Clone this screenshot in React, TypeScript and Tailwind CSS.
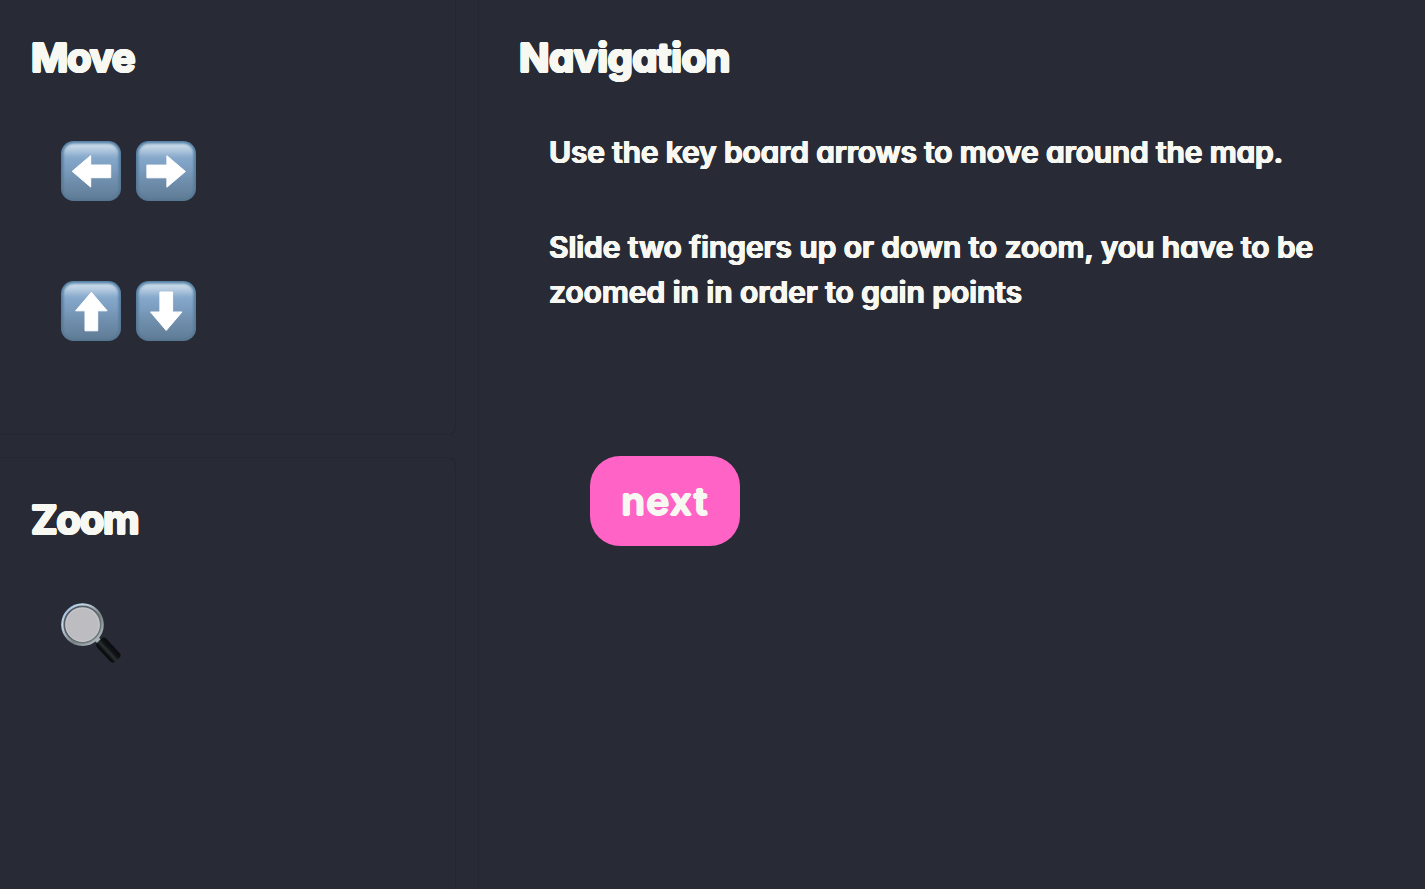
import type { ReactNode } from "react";

type Direction = "left" | "right" | "up" | "down";

const rotation: Record<Direction, number> = { left: 0, up: 90, right: 180, down: 270 };

function ArrowKey({ direction }: { direction: Direction }) {
  const id = `key-${direction}`;
  return (
    <svg width="60" height="60" viewBox="0 0 60 60" role="img" aria-label={`${direction} arrow`}>
      <defs>
        <linearGradient id={id} x1="0" y1="0" x2="0" y2="1">
          <stop offset="0" stopColor="#cadceb" />
          <stop offset="0.08" stopColor="#bdd1e3" />
          <stop offset="0.25" stopColor="#86a8cb" />
          <stop offset="0.45" stopColor="#7c9dc0" />
          <stop offset="0.65" stopColor="#7190ae" />
          <stop offset="1" stopColor="#607d97" />
        </linearGradient>
        <linearGradient id={`${id}-edge`} x1="0" y1="0" x2="0" y2="1">
          <stop offset="0" stopColor="#5480a5" />
          <stop offset="0.5" stopColor="#587c9c" />
          <stop offset="1" stopColor="#567690" />
        </linearGradient>
        <filter id={`${id}-soft`} x="-10%" y="-10%" width="120%" height="120%">
          <feGaussianBlur stdDeviation="0.8" />
        </filter>
      </defs>
      <rect width="60" height="60" rx="12.5" fill={`url(#${id}-edge)`} />
      <rect x="2.4" y="2.6" width="55.2" height="55.4" rx="10" fill={`url(#${id})`} filter={`url(#${id}-soft)`} />
      <path
        d="M11.2 30.3 29.7 14.6V24H49.7V36.7H29.7V46.1Z"
        fill="#fff"
        stroke="#fff"
        strokeWidth="1"
        strokeLinejoin="round"
        transform={`rotate(${rotation[direction]} 30.3 30.4)`}
      />
    </svg>
  );
}

function MagnifyingGlass() {
  return (
    <svg width="60" height="60" viewBox="0 0 60 60" role="img" aria-label="magnifying glass">
      <defs>
        <linearGradient id="rim" x1="0" y1="0" x2="1" y2="1">
          <stop offset="0" stopColor="#79a5cf" />
          <stop offset="0.25" stopColor="#c9dbe8" />
          <stop offset="0.6" stopColor="#788186" />
          <stop offset="1" stopColor="#c3cdd0" />
        </linearGradient>
        <linearGradient id="inner-rim" x1="0" y1="0" x2="1" y2="1">
          <stop offset="0" stopColor="#4d5a66" />
          <stop offset="0.5" stopColor="#5c656a" />
          <stop offset="1" stopColor="#7b868a" />
        </linearGradient>
        <linearGradient id="handle" x1="0" y1="0" x2="0" y2="1">
          <stop offset="0" stopColor="#090b0d" />
          <stop offset="0.35" stopColor="#101315" />
          <stop offset="0.6" stopColor="#2b3033" />
          <stop offset="0.8" stopColor="#111416" />
          <stop offset="1" stopColor="#050607" />
        </linearGradient>
      </defs>
      <path d="m35 35 4 4.5" stroke="#a5b1b4" strokeWidth="5" />
      <circle cx="21.5" cy="21.6" r="20.1" fill="#bdbcc1" stroke="url(#rim)" strokeWidth="2.4" />
      <circle cx="21.5" cy="21.6" r="18.2" fill="none" stroke="url(#inner-rim)" strokeWidth="1.8" />
      <circle cx="21.5" cy="21.8" r="16.6" fill="none" stroke="#cfced2" strokeWidth="0.7" />
      <rect x="34.3" y="40.7" width="26.4" height="12.6" rx="3.8" fill="url(#handle)" transform="rotate(47 47.3 46.9)" />
    </svg>
  );
}

function Heading({ children, className }: { children: ReactNode; className: string }) {
  return (
    <h1
      className={`whitespace-nowrap text-[40px] font-bold leading-[60px] [text-shadow:1.2px_0_#f8f8f2,-1.2px_0_#f8f8f2,0_0.8px_#f8f8f2,0_-0.8px_#f8f8f2,0.8px_0.6px_#f8f8f2,-0.8px_0.6px_#f8f8f2,0.8px_-0.6px_#f8f8f2,-0.8px_-0.6px_#f8f8f2] ${className}`}
    >
      {children}
    </h1>
  );
}

export default function App() {
  return (
    <main className="flex h-[889px] w-[1425px] gap-[22px] overflow-hidden bg-[#282a36] font-['Inter',sans-serif] text-[#f8f8f2] [font-feature-settings:'cv11']">
      <div className="flex w-[456px] shrink-0 flex-col gap-[22px]">
        <section className="h-[435px] shrink-0 rounded-br-[8px] border-r border-b border-[#242631] pl-[31px] pt-[28px]">
          <Heading className="tracking-[-1.2px]">Move</Heading>
          <div className="mt-[53px] flex gap-[15px] pl-[30px]">
            <ArrowKey direction="left" />
            <ArrowKey direction="right" />
          </div>
          <div className="mt-[80px] flex gap-[15px] pl-[30px]">
            <ArrowKey direction="up" />
            <ArrowKey direction="down" />
          </div>
        </section>
        <section className="grow rounded-tr-[8px] border-t border-r border-[#242631] pl-[31px] pt-[32px]">
          <Heading className="tracking-[-1.2px]">Zoom</Heading>
          <div className="mt-[53px] pl-[30px]">
            <MagnifyingGlass />
          </div>
        </section>
      </div>
      <section className="grow border-l border-[#242631] pl-[40px] pt-[28px]">
        <Heading className="tracking-[-0.5px]">Navigation</Heading>
        <div className="whitespace-nowrap pl-[30px] text-[30px] font-semibold leading-[45px] [text-shadow:0.7px_0_#f8f8f2,-0.7px_0_#f8f8f2,0_0.4px_#f8f8f2,0_-0.4px_#f8f8f2]">
          <p className="mt-[42px] tracking-[-0.17px]">Use the key board arrows to move around the map.</p>
          <p className="mt-[50px]">
            <span className="block tracking-[-0.06px]">Slide two fingers up or down to zoom, you have to be</span>
            <span className="block tracking-[-0.04px]">zoomed in in order to gain points</span>
          </p>
        </div>
        <button className="ml-[71px] mt-[141px] flex h-[90px] w-[150px] items-center justify-center rounded-[30px] bg-[#ff63c5] text-[39px] font-semibold tracking-[1.2px] [text-shadow:1px_0_#f8f8f2,-1px_0_#f8f8f2,0_0.6px_#f8f8f2,0_-0.6px_#f8f8f2]">
          next
        </button>
      </section>
    </main>
  );
}
